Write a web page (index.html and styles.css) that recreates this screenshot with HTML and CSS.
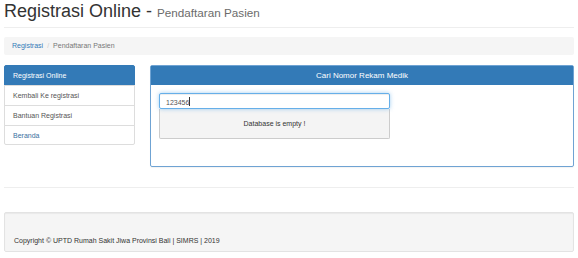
FILE: index.html
```html
<!DOCTYPE html>
<html lang="id">
<head>
<meta charset="utf-8">
<title>Registrasi Online</title>
<link rel="stylesheet" href="styles.css">
</head>
<body>
<div class="container">
  <div class="page-header">
    <h1>Registrasi Online - <small>Pendaftaran Pasien</small></h1>
  </div>
  <ol class="breadcrumb">
    <li><a href="#">Registrasi</a></li>
    <li class="sep">/</li>
    <li class="current">Pendaftaran Pasien</li>
  </ol>
  <div class="row">
    <div class="list-group">
      <a href="#" class="list-group-item active">Registrasi Online</a>
      <a href="#" class="list-group-item">Kembali Ke registrasi</a>
      <a href="#" class="list-group-item">Bantuan Registrasi</a>
      <a href="#" class="list-group-item link">Beranda</a>
    </div>
    <div class="panel">
      <div class="panel-heading">Cari Nomor Rekam Medik</div>
      <div class="panel-body">
        <div class="search">
          <div class="form-control">123456<span class="caret"></span></div>
          <div class="results">Database is empty !</div>
        </div>
      </div>
    </div>
  </div>
  <hr class="divider">
  <div class="well">
    <p>Copyright © UPTD Rumah Sakit Jiwa Provinsi Bali | SIMRS | 2019</p>
  </div>
</div>
</body>
</html>
```

FILE: styles.css
```css
* { box-sizing: border-box; }
html, body {
  margin: 0;
  padding: 0;
  background: #fff;
}
body {
  font-family: "Liberation Sans", Arial, Helvetica, sans-serif;
  font-size: 7px;
  line-height: 10px;
  color: #333;
}
a { color: #337ab7; text-decoration: none; }
.container {
  padding: 0 4px;
}
.page-header {
  padding-top: 1px;
  padding-bottom: 4px;
  border-bottom: 1px solid #eee;
}
.page-header h1 {
  margin: 0;
  font-size: 18px;
  line-height: 20px;
  font-weight: 400;
  color: #333;
}
.page-header h1 small {
  font-size: 11.7px;
  color: #6b6b6b;
  font-weight: 400;
}
.breadcrumb {
  list-style: none;
  margin: 9px 0 10px;
  padding: 4px 8px;
  height: 18px;
  background: #f5f5f5;
  border-radius: 2px;
  display: flex;
  gap: 3px;
}
.breadcrumb li { margin: 0; }
.breadcrumb .sep { color: #ccc; padding: 0 1px; }
.breadcrumb .current { color: #777; }
.row {
  display: flex;
  align-items: flex-start;
  gap: 15px;
}
.list-group {
  width: 131px;
  flex: none;
  display: flex;
  flex-direction: column;
  border-radius: 2px;
}
.list-group-item {
  display: block;
  height: 21px;
  padding: 5px 8px;
  border: 1px solid #ddd;
  margin-bottom: -1px;
  color: #555;
  background: #fff;
}
.list-group-item:first-child { border-radius: 2px 2px 0 0; }
.list-group-item:last-child { border-radius: 0 0 2px 2px; margin-bottom: 0; height: 20px; }
.list-group-item.active {
  background: #337ab7;
  border-color: #337ab7;
  color: #fff;
}
.list-group-item.link { color: #3b6fa0; }
.panel {
  flex: 1;
  border: 1px solid #6fa3d3;
  border-radius: 2px;
  box-shadow: 0 1px 1px rgba(0,0,0,.05);
  margin-bottom: 0;
}
.panel-heading {
  background: #337ab7;
  color: #fff;
  height: 19px;
  padding: 5px 8px;
  font-size: 8px;
  line-height: 9px;
  text-align: center;
}
.panel-body {
  padding: 8px 8px 27px;
}
.search {
  width: 231px;
}
.form-control {
  height: 16px;
  padding: 3px 6px;
  line-height: 10px;
  border: 1px solid #66afe9;
  border-radius: 2px;
  background: #fff;
  color: #555;
  box-shadow: inset 0 1px 1px rgba(0,0,0,.075), 0 0 4px rgba(102,175,233,.6);
  position: relative;
  z-index: 1;
}
.caret {
  display: inline-block;
  width: 1px;
  height: 9px;
  background: #333;
  vertical-align: -1px;
}
.results {
  height: 30px;
  border: 1px solid #ccc;
  border-top: 0;
  border-radius: 0 0 2px 2px;
  background: #f4f4f4;
  text-align: center;
  line-height: 29px;
  color: #333;
}
.divider {
  margin: 20px 0 0;
  border: 0;
  border-top: 1px solid #eee;
}
.well {
  margin-top: 24px;
  height: 40px;
  padding: 0 9px;
  background: #f5f5f5;
  border: 1px solid #e3e3e3;
  border-radius: 2px;
  box-shadow: inset 0 1px 1px rgba(0,0,0,.05);
  display: flex;
  align-items: flex-end;
}
.well p {
  margin: 0 0 5px;
}
```
